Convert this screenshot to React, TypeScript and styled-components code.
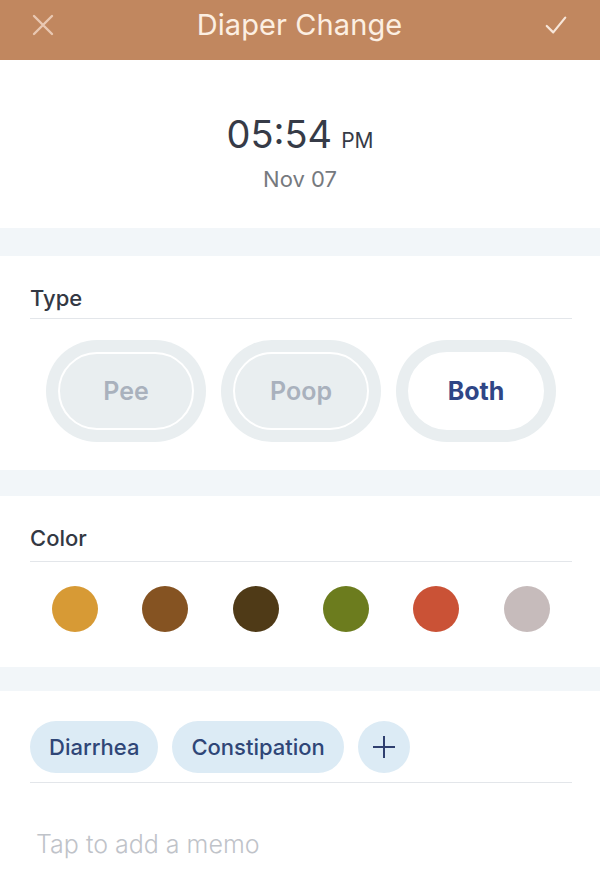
import styled, { createGlobalStyle } from 'styled-components';

const GlobalStyle = createGlobalStyle`
  html, body {
    margin: 0;
    padding: 0;
    background: #ffffff;
  }
  body {
    font-family: Inter, "Noto Sans", sans-serif;
    -webkit-font-smoothing: antialiased;
  }
  * {
    box-sizing: border-box;
  }
`;

const Screen = styled.div`
  width: 600px;
  min-height: 869px;
  background: #ffffff;
  display: flex;
  flex-direction: column;
`;

const Header = styled.header`
  height: 60px;
  background: #c1875f;
  display: flex;
  align-items: center;
  justify-content: space-between;
  padding: 0 32px 11px 31px;
`;

const IconButton = styled.button`
  width: 24px;
  height: 24px;
  padding: 0;
  border: none;
  background: none;
  display: flex;
  align-items: center;
  justify-content: center;
`;

const Title = styled.h1`
  margin: 0;
  font-size: 29px;
  font-weight: 400;
  color: #fcefe2;
  letter-spacing: 0.1px;
`;

const TimeBlock = styled.section`
  height: 168px;
  display: flex;
  flex-direction: column;
  align-items: center;
  padding-top: 52px;
`;

const Clock = styled.div`
  display: flex;
  align-items: baseline;
  gap: 9px;
  color: #363b47;
`;

const Digits = styled.span`
  font-size: 38px;
  line-height: 44px;
  font-weight: 400;
`;

const Meridiem = styled.span`
  font-size: 21px;
  font-weight: 400;
`;

const DateText = styled.div`
  margin-top: 10px;
  font-size: 22px;
  line-height: 26px;
  color: #76797e;
`;

const Band = styled.div<{ h: number }>`
  height: ${({ h }) => h}px;
  background: #f2f6f9;
`;

const Section = styled.section<{ top: number; bottom: number }>`
  padding: ${({ top }) => top}px 28px ${({ bottom }) => bottom}px 30px;
`;

const Label = styled.h2`
  margin: 0;
  font-size: 22px;
  line-height: 24px;
  font-weight: 500;
  color: #333843;
`;

const Divider = styled.div<{ top: number }>`
  height: 1px;
  background: #e3e6ea;
  margin-top: ${({ top }) => top}px;
`;

const PillRow = styled.div`
  display: flex;
  justify-content: center;
  gap: 15px;
  margin-top: 21px;
`;

const PillOuter = styled.div`
  width: 160px;
  height: 102px;
  border-radius: 51px;
  background: #e9eef0;
  padding: 12px;
`;

const PillInner = styled.div<{ active?: boolean }>`
  height: 100%;
  border-radius: 39px;
  border: 2px solid #ffffff;
  background: ${({ active }) => (active ? '#ffffff' : '#e9eef0')};
  display: flex;
  align-items: center;
  justify-content: center;
  font-size: 25px;
  font-weight: ${({ active }) => (active ? 700 : 600)};
  color: ${({ active }) => (active ? '#2f4686' : '#a9b1bd')};
`;

const SwatchRow = styled.div`
  display: grid;
  grid-template-columns: repeat(6, 1fr);
  justify-items: center;
  margin-top: 24px;
`;

const Swatch = styled.div<{ color: string }>`
  width: 46px;
  height: 46px;
  border-radius: 50%;
  background: ${({ color }) => color};
`;

const TagRow = styled.div`
  display: flex;
  gap: 14px;
`;

const Tag = styled.div`
  height: 52px;
  padding: 0 19px;
  border-radius: 26px;
  background: #dcebf5;
  display: flex;
  align-items: center;
  font-size: 22px;
  font-weight: 500;
  color: #2f4677;
`;

const AddTag = styled.button`
  width: 52px;
  height: 52px;
  border-radius: 50%;
  border: none;
  padding: 0;
  background: #dcebf5;
  display: flex;
  align-items: center;
  justify-content: center;
`;

const Memo = styled.div`
  padding: 47px 36px 0;
  font-size: 25px;
  line-height: 28px;
  font-weight: 300;
  color: #bfc3c9;
`;

const colors = ['#d79a35', '#855322', '#4f3a17', '#6c7c1e', '#ca5236', '#c6bbbb'];

export default function App() {
  return (
    <Screen>
      <GlobalStyle />
      <Header>
        <IconButton aria-label="close">
          <svg width="24" height="24" viewBox="0 0 24 24">
            <path d="M3 3 L21 21 M21 3 L3 21" stroke="#e9c8b2" strokeWidth="2.4" strokeLinecap="round" />
          </svg>
        </IconButton>
        <Title>Diaper Change</Title>
        <IconButton aria-label="save">
          <svg width="26" height="24" viewBox="0 0 26 24">
            <path d="M3 13 L10 20 L23 4" stroke="#f7e6d9" strokeWidth="2.4" fill="none" strokeLinecap="round" strokeLinejoin="round" />
          </svg>
        </IconButton>
      </Header>

      <TimeBlock>
        <Clock>
          <Digits>05:54</Digits>
          <Meridiem>PM</Meridiem>
        </Clock>
        <DateText>Nov 07</DateText>
      </TimeBlock>

      <Band h={28} />

      <Section top={30} bottom={28}>
        <Label>Type</Label>
        <Divider top={8} />
        <PillRow>
          <PillOuter>
            <PillInner>Pee</PillInner>
          </PillOuter>
          <PillOuter>
            <PillInner>Poop</PillInner>
          </PillOuter>
          <PillOuter>
            <PillInner active>Both</PillInner>
          </PillOuter>
        </PillRow>
      </Section>

      <Band h={26} />

      <Section top={30} bottom={35}>
        <Label>Color</Label>
        <Divider top={11} />
        <SwatchRow>
          {colors.map((c) => (
            <Swatch key={c} color={c} />
          ))}
        </SwatchRow>
      </Section>

      <Band h={24} />

      <Section top={30} bottom={0}>
        <TagRow>
          <Tag>Diarrhea</Tag>
          <Tag>Constipation</Tag>
          <AddTag aria-label="add tag">
            <svg width="24" height="24" viewBox="0 0 24 24">
              <path d="M12 1 V23 M1 12 H23" stroke="#2f3f6f" strokeWidth="2" />
            </svg>
          </AddTag>
        </TagRow>
        <Divider top={9} />
      </Section>

      <Memo>Tap to add a memo</Memo>
    </Screen>
  );
}
